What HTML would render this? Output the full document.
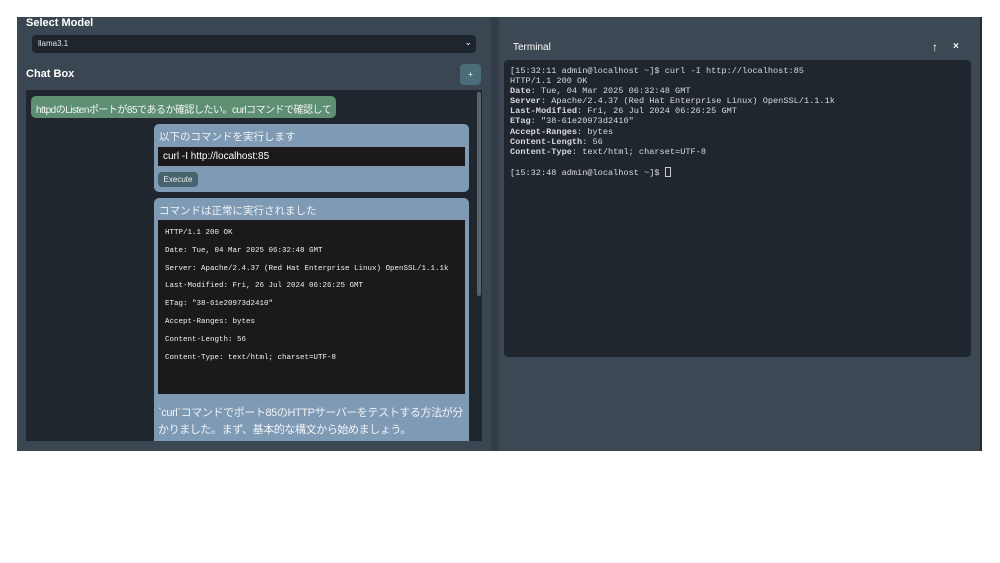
<!DOCTYPE html>
<html><head><meta charset="utf-8"><style>
*{box-sizing:border-box;margin:0;padding:0}
body{width:1000px;height:563px;background:#fff;position:relative;overflow:hidden;font-family:"Liberation Sans","Noto Sans CJK JP",sans-serif}
.abs{position:absolute}
.lbl{color:#fff;font-weight:bold;font-size:11px}
.mono{font-family:"Liberation Mono","DejaVu Sans Mono",monospace}
.bot{background:#7e9ab5;border-radius:5px;color:#f0f3f6;font-size:11px}
</style></head><body>
<div class="abs" style="left:17px;top:17px;width:474px;height:434px;background:#3a4651"></div>
<div class="abs" style="left:491px;top:17px;width:8px;height:434px;background:#323d47"></div>

<div class="abs" style="left:499px;top:17px;width:483px;height:434px;background:#3c4853;border-right:2px solid #232b33;z-index:1">
 <div class="abs" style="left:14px;top:25px;color:#fff;font-size:10px">Terminal</div>
 <div class="abs" style="left:433px;top:23px;color:#fff;font-size:12px">↑</div>
 <div class="abs" style="left:454px;top:24px;color:#fff;font-size:10px;font-weight:bold">×</div>
 <div class="abs mono" style="left:5px;top:43px;width:467px;height:297px;background:#1f262d;border-radius:4px;color:#d8dadc;font-size:8.6px;line-height:10.1px;padding:6px 0 0 6px;white-space:pre">[15:32:11 admin@localhost ~]$ curl -I http://localhost:85
HTTP/1.1 200 OK
<b>Date</b>: Tue, 04 Mar 2025 06:32:48 GMT
<b>Server</b>: Apache/2.4.37 (Red Hat Enterprise Linux) OpenSSL/1.1.1k
<b>Last-Modified</b>: Fri, 26 Jul 2024 06:26:25 GMT
<b>ETag</b>: "38-61e20973d2410"
<b>Accept-Ranges</b>: bytes
<b>Content-Length</b>: 56
<b>Content-Type</b>: text/html; charset=UTF-8

[15:32:48 admin@localhost ~]$ <span style="display:inline-block;width:6px;height:10px;border:1px solid #ccc;vertical-align:-2px"></span></div>
</div>

<div class="abs lbl" style="left:26px;top:17px">Select Model</div>
<div class="abs" style="left:32px;top:35px;width:444px;height:18px;background:#1e252c;border-radius:4px;color:#dfe3e7;font-size:8px;padding:4px 0 0 6px">llama3.1<span style="position:absolute;right:4px;top:2px;font-size:9px;color:#fff">⌄</span></div>
<div class="abs lbl" style="left:26px;top:68px">Chat Box</div>
<div class="abs" style="left:460px;top:64px;width:21px;height:21px;background:#4b6d79;border-radius:4px;color:#fff;font-size:8px;text-align:center;line-height:21px">+</div>

<div class="abs" style="left:26px;top:90px;width:456px;height:351px;background:#1f262d;overflow:hidden">
 <div class="abs" style="right:1px;top:2px;width:4px;height:204px;background:#5a636c;border-radius:2px"></div>
 <div class="abs" style="left:5px;top:6px;height:22px;background:#5e8f72;border-radius:5px;color:#f2f5f3;font-size:10px;padding:5px 5px 0 5px;white-space:nowrap;letter-spacing:-0.5px">httpdのListenポートが85であるか確認したい。curlコマンドで確認して</div>
 <div class="abs bot" style="left:128px;top:34px;width:315px;height:68px">
  <div style="position:absolute;left:5px;top:5px;font-size:10.5px">以下のコマンドを実行します</div>
  <div style="position:absolute;left:4px;top:23px;width:307px;height:19px;background:#1b191a;color:#fff;font-size:10px;padding:4px 0 0 5px">curl -I http://localhost:85</div>
  <div style="position:absolute;left:4px;top:48px;width:40px;height:15px;background:#48626e;border-radius:4px;color:#e8eef0;font-size:8px;text-align:center;line-height:15px">Execute</div>
 </div>
 <div class="abs bot" style="left:128px;top:108px;width:315px;height:260px">
  <div style="position:absolute;left:5px;top:5px;font-size:10.5px">コマンドは正常に実行されました</div>
  <div class="mono" style="position:absolute;left:4px;top:22px;width:307px;height:174px;background:#1b191a;color:#f2f2f2;font-size:7.5px;line-height:17.8px;padding:5px 0 0 7px;white-space:pre">HTTP/1.1 200 OK
Date: Tue, 04 Mar 2025 06:32:48 GMT
Server: Apache/2.4.37 (Red Hat Enterprise Linux) OpenSSL/1.1.1k
Last-Modified: Fri, 26 Jul 2024 06:26:25 GMT
ETag: "38-61e20973d2410"
Accept-Ranges: bytes
Content-Length: 56
Content-Type: text/html; charset=UTF-8</div>
  <div style="position:absolute;left:4px;top:207px;width:307px;font-size:11px;line-height:17px;letter-spacing:-0.4px">`curl`コマンドでポート85のHTTPサーバーをテストする方法が分かりました。まず、基本的な構文から始めましょう。
